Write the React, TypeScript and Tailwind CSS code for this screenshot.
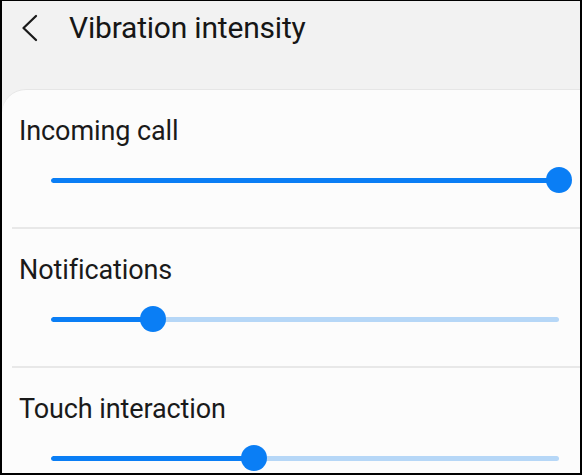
import React from "react";

const rows = [
  { label: "Incoming call", value: 1 },
  { label: "Notifications", value: 0.2 },
  { label: "Touch interaction", value: 0.4 },
];

function Slider({ value }: { value: number }) {
  return (
    <div className="relative ml-[49px] w-[508px] h-[26px] flex items-center">
      <div className="h-[5px] w-full rounded-full bg-[#b6d7f7] overflow-hidden">
        <div className="h-full rounded-full bg-[#0a7ef5]" style={{ width: `${value * 100}%` }} />
      </div>
      <div
        className="absolute top-0 h-[26px] w-[26px] -translate-x-1/2 rounded-full bg-[#0a7ef5]"
        style={{ left: `${value * 100}%` }}
      />
    </div>
  );
}

export default function App() {
  return (
    <div
      className="w-[582px] h-[475px] overflow-hidden bg-[#f2f2f2] border-l-2 border-r-2 border-b-2 border-t border-black flex flex-col"
      style={{ fontFamily: "Roboto, 'Noto Sans', sans-serif" }}
    >
      <div className="h-[88px] shrink-0 flex items-start pt-[9px]">
        <div className="w-[64px] h-[36px] flex items-center pl-[18px]">
          <svg width="20" height="28" viewBox="0 0 20 28" fill="none">
            <path d="M16 2 L3.5 14 L16 26" stroke="#1a1a1a" strokeWidth="2.3" strokeLinecap="round" strokeLinejoin="round" />
          </svg>
        </div>
        <div className="ml-[3px] text-[30px] leading-[36px] text-[#161616] tracking-[-0.2px]">Vibration intensity</div>
      </div>
      <div className="flex-1 bg-[#fcfcfc] rounded-tl-[24px] border-t border-[#e6e6e6]">
        {rows.map((r, i) => (
          <div key={r.label}>
            <div className="pt-[26px] pb-[34px]">
              <div className="pl-[17px] text-[27px] leading-[30px] text-[#1a1a1a] tracking-[-0.1px]">{r.label}</div>
              <div className="mt-[21px]">
                <Slider value={r.value} />
              </div>
            </div>
            {i < rows.length - 1 && <div className="ml-[10px] h-[2px] bg-[#e8e8e8]" />}
          </div>
        ))}
      </div>
    </div>
  );
}
